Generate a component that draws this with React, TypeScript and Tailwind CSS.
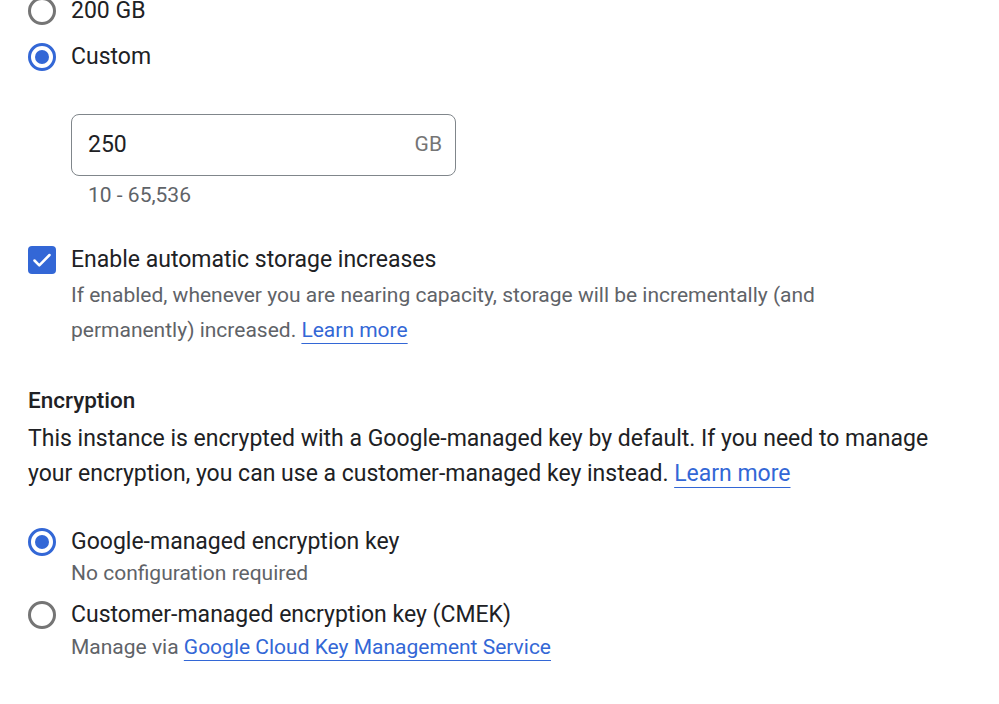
import React from 'react';

function Radio({ checked }: { checked: boolean }) {
  return (
    <span
      className={`flex h-[28px] w-[28px] shrink-0 items-center justify-center rounded-full border-[3px] ${
        checked ? 'border-[#3367d6]' : 'border-[#757575]'
      }`}
    >
      {checked && <span className="h-[14px] w-[14px] rounded-full bg-[#3367d6]" />}
    </span>
  );
}

function Checkbox() {
  return (
    <span className="flex h-[28px] w-[28px] shrink-0 items-center justify-center rounded-[4px] bg-[#3367d6]">
      <svg width="24" height="24" viewBox="0 0 24 24" fill="none">
        <path d="M4.5 12.5l4.8 4.8L19.5 7" stroke="white" strokeWidth="2.5" strokeLinecap="round" strokeLinejoin="round" />
      </svg>
    </span>
  );
}

function Link({ children }: { children: React.ReactNode }) {
  return (
    <a className="text-[#3367d6] underline decoration-1 underline-offset-[6px]" href="#">
      {children}
    </a>
  );
}

export default function App() {
  return (
    <div
      className="h-[704px] w-[999px] overflow-hidden bg-white pl-[28px] text-[#202124]"
      style={{ fontFamily: 'Roboto, "Liberation Sans", sans-serif' }}
    >
      {/* disk size options */}
      <div className="-mt-[7px] flex h-[36px] items-center gap-[15px] text-[23px]">
        <Radio checked={false} />
        <span>200 GB</span>
      </div>
      <div className="mt-[10px] flex h-[36px] items-center gap-[15px] text-[23px]">
        <Radio checked />
        <span>Custom</span>
      </div>

      <div className="ml-[43px] mt-[39px] flex h-[62px] w-[385px] items-center justify-between rounded-[8px] border border-[#80868b] pl-[16px] pr-[13px]">
        <span className="text-[23px]">250</span>
        <span className="text-[21px] text-[#757575]">GB</span>
      </div>
      <div className="ml-[60px] mt-[5px] text-[21px] leading-[28px] text-[#5f6368]">10 - 65,536</div>

      {/* auto increase */}
      <div className="mt-[33px] flex h-[36px] items-center gap-[15px] text-[23px]">
        <Checkbox />
        <span>Enable automatic storage increases</span>
      </div>
      <p className="ml-[43px] w-[800px] text-[21px] leading-[35px] text-[#5f6368]">
        If enabled, whenever you are nearing capacity, storage will be incrementally (and permanently) increased.{' '}
        <Link>Learn more</Link>
      </p>

      {/* encryption */}
      <h3 className="mt-[37px] text-[22.5px] font-medium leading-[30px]">Encryption</h3>
      <p className="mt-[6px] w-[910px] text-[23px] leading-[35px]">
        This instance is encrypted with a Google-managed key by default. If you need to manage your encryption, you can
        use a customer-managed key instead. <Link>Learn more</Link>
      </p>

      <div className="mt-[35px] flex h-[32px] items-center gap-[15px] text-[23px]">
        <Radio checked />
        <span>Google-managed encryption key</span>
      </div>
      <div className="ml-[43px] text-[21px] leading-[30px] text-[#5f6368]">No configuration required</div>

      <div className="mt-[11px] flex h-[32px] items-center gap-[15px] text-[23px]">
        <Radio checked={false} />
        <span>Customer-managed encryption key (CMEK)</span>
      </div>
      <div className="ml-[43px] mt-[1px] text-[21px] leading-[30px] text-[#5f6368]">
        Manage via <Link>Google Cloud Key Management Service</Link>
      </div>
    </div>
  );
}
